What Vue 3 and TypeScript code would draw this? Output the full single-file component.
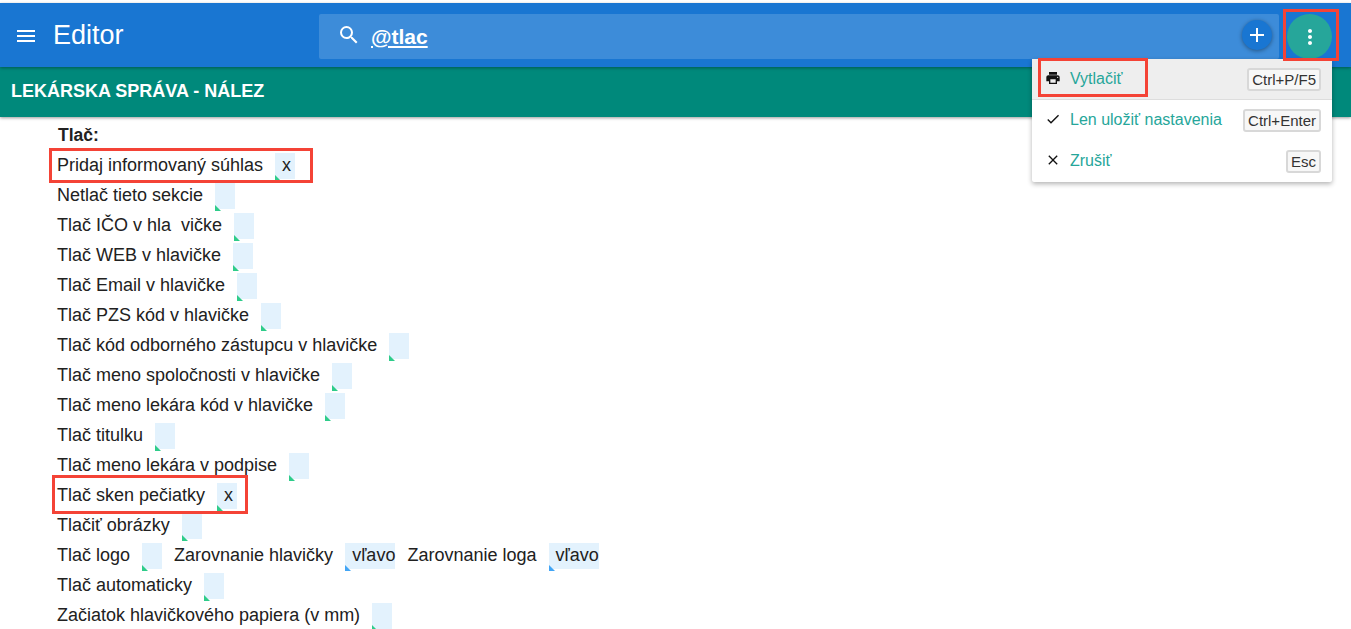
<template>
  <div class="page">
    <header class="toolbar">
      <button class="icon-btn menu-btn" aria-label="menu">
        <svg width="24" height="24" viewBox="0 0 24 24"><path d="M3 18h18v-2H3v2zm0-5h18v-2H3v2zm0-7v2h18V6H3z" fill="#fff" /></svg>
      </button>
      <div class="title">Editor</div>
      <div class="search">
        <svg class="search-icon" width="24" height="24" viewBox="0 0 24 24"><path d="M15.5 14h-.79l-.28-.27A6.47 6.47 0 0 0 16 9.5 6.5 6.5 0 1 0 9.5 16c1.61 0 3.09-.59 4.23-1.57l.27.28v.79l5 4.99L20.49 19l-4.99-5zm-6 0C7.01 14 5 11.99 5 9.5S7.01 5 9.5 5 14 7.01 14 9.5 11.99 14 9.5 14z" fill="#fff" /></svg>
        <span class="query">@tlac</span>
        <button class="add-btn" aria-label="add">
          <svg width="24" height="24" viewBox="0 0 24 24"><path d="M19 13h-6v6h-2v-6H5v-2h6V5h2v6h6v2z" fill="#fff" /></svg>
        </button>
      </div>
      <button class="fab" aria-label="more">
        <svg width="24" height="24" viewBox="0 0 24 24"><path d="M12 8c1.1 0 2-.9 2-2s-.9-2-2-2-2 .9-2 2 .9 2 2 2zm0 2c-1.1 0-2 .9-2 2s.9 2 2 2 2-.9 2-2-.9-2-2-2zm0 6c-1.1 0-2 .9-2 2s.9 2 2 2 2-.9 2-2-.9-2-2-2z" fill="#fff" /></svg>
      </button>
    </header>

    <div class="subbar">LEKÁRSKA SPRÁVA - NÁLEZ</div>

    <main class="content">
      <div class="heading">Tlač:</div>
      <div v-for="row in rows" :key="row[0].label" class="row">
        <template v-for="item in row" :key="item.label">
          <span class="label">{{ item.label }}</span>
          <span class="field" :class="{ select: item.select }">{{ item.value }}</span>
        </template>
      </div>
    </main>

    <div class="menu">
      <div v-for="action in actions" :key="action.label" class="menu-item" :class="{ active: action.active }">
        <svg class="menu-icon" width="16" height="16" viewBox="0 0 24 24"><path :d="action.icon" fill="#111" /></svg>
        <span class="menu-label">{{ action.label }}</span>
        <kbd class="key">{{ action.key }}</kbd>
      </div>
    </div>

    <!-- cervene oznacenia zo screenshotu -->
    <div class="mark mark-fab"></div>
    <div class="mark mark-print"></div>
    <div class="mark mark-consent"></div>
    <div class="mark mark-stamp"></div>
  </div>
</template>

<script setup lang="ts">
interface Item {
  label: string
  value?: string
  select?: boolean
}

const rows: Item[][] = [
  [{ label: 'Pridaj informovaný súhlas', value: 'x' }],
  [{ label: 'Netlač tieto sekcie' }],
  [{ label: 'Tlač IČO v hla  vičke' }],
  [{ label: 'Tlač WEB v hlavičke' }],
  [{ label: 'Tlač Email v hlavičke' }],
  [{ label: 'Tlač PZS kód v hlavičke' }],
  [{ label: 'Tlač kód odborného zástupcu v hlavičke' }],
  [{ label: 'Tlač meno spoločnosti v hlavičke' }],
  [{ label: 'Tlač meno lekára kód v hlavičke' }],
  [{ label: 'Tlač titulku' }],
  [{ label: 'Tlač meno lekára v podpise' }],
  [{ label: 'Tlač sken pečiatky', value: 'x' }],
  [{ label: 'Tlačiť obrázky' }],
  [
    { label: 'Tlač logo' },
    { label: 'Zarovnanie hlavičky', value: 'vľavo', select: true },
    { label: 'Zarovnanie loga', value: 'vľavo', select: true }
  ],
  [{ label: 'Tlač automaticky' }],
  [{ label: 'Začiatok hlavičkového papiera (v mm)' }]
]

const actions = [
  {
    label: 'Vytlačiť',
    key: 'Ctrl+P/F5',
    active: true,
    icon: 'M19 8H5c-1.66 0-3 1.34-3 3v6h4v4h12v-4h4v-6c0-1.66-1.34-3-3-3zm-3 11H8v-5h8v5zm3-7c-.55 0-1-.45-1-1s.45-1 1-1 1 .45 1 1-.45 1-1 1zm-1-9H6v4h12V3z'
  },
  {
    label: 'Len uložiť nastavenia',
    key: 'Ctrl+Enter',
    active: false,
    icon: 'M9 16.17L4.83 12l-1.42 1.41L9 19 21 7l-1.41-1.41z'
  },
  {
    label: 'Zrušiť',
    key: 'Esc',
    active: false,
    icon: 'M19 6.41L17.59 5 12 10.59 6.41 5 5 6.41 10.59 12 5 17.59 6.41 19 12 13.41 17.59 19 19 17.59 13.41 12z'
  }
]
</script>

<style>
html,
body {
  background: #fff;
  overflow: hidden;
}
</style>

<style scoped>
.page {
  position: relative;
  height: 629px;
  padding-top: 3px;
  box-sizing: border-box;
  overflow: hidden;
  font-family: "Liberation Sans", Arial, sans-serif;
  color: #212121;
}

.toolbar {
  position: relative;
  z-index: 2;
  display: flex;
  align-items: center;
  height: 64px;
  background: #1976d2;
  color: #fff;
  box-shadow: 0 1px 3px rgba(0, 0, 0, 0.35);
}

.icon-btn,
.add-btn,
.fab {
  display: flex;
  align-items: center;
  justify-content: center;
  padding: 0;
  border: 0;
  border-radius: 50%;
}

.menu-btn {
  width: 24px;
  height: 24px;
  margin: 2px 0 0 14px;
  background: none;
}

.title {
  width: 266px;
  margin: -1px 0 0 15px;
  font-size: 27px;
  line-height: 32px;
}

.search {
  display: flex;
  align-items: center;
  width: 960px;
  height: 45px;
  padding: 0 7px 0 18px;
  box-sizing: border-box;
  background: rgba(255, 255, 255, 0.16);
  border-radius: 2px;
  margin-top: 3px;
}

.search-icon {
  flex: none;
  margin-bottom: 3px;
}

.query {
  flex: 1;
  margin-left: 10px;
  font-size: 21px;
  font-weight: 700;
  text-decoration: underline;
}

.add-btn {
  width: 30px;
  height: 30px;
  margin-bottom: 3px;
  background: #1976d2;
  box-shadow: 0 1px 4px rgba(0, 0, 0, 0.4);
}

.fab {
  width: 45px;
  height: 45px;
  margin: 3px 0 0 8px;
  background: #26a69a;
}

.subbar {
  position: relative;
  z-index: 1;
  height: 50px;
  padding-left: 11px;
  background: #00897b;
  color: #fff;
  font-size: 18px;
  font-weight: 700;
  line-height: 49px;
  box-shadow: 0 1px 3px rgba(0, 0, 0, 0.4);
}

.content {
  padding: 6px 0 0 57px;
  font-size: 18px;
}

.heading {
  height: 30px;
  padding-left: 1px;
  font-size: 17.5px;
  font-weight: 700;
  line-height: 24px;
}

.row {
  display: flex;
  align-items: flex-start;
  gap: 12px;
  height: 30px;
  line-height: 24px;
  white-space: pre;
}

.field {
  position: relative;
  box-sizing: border-box;
  min-width: 20px;
  height: 26px;
  padding-left: 7px;
  background: #e3f2fd;
}

.field::after {
  content: "";
  position: absolute;
  left: 0;
  bottom: -2px;
  border-top: 6px solid transparent;
  border-left: 6px solid #2ecc8a;
}

.field.select::after {
  border-left-color: #42a5f5;
}

.menu {
  position: absolute;
  z-index: 3;
  top: 59px;
  left: 1032px;
  width: 300px;
  background: #fff;
  border-radius: 2px;
  box-shadow: 0 2px 5px rgba(0, 0, 0, 0.3);
}

.menu-item {
  display: flex;
  align-items: center;
  box-sizing: border-box;
  height: 41px;
  padding: 0 11px 0 13px;
  font-size: 16px;
}

.menu-item.active {
  background: #eee;
  border-bottom: 1px solid #ddd;
}

.menu-icon {
  flex: none;
  margin-bottom: 3px;
}

.menu-label {
  flex: 1;
  margin: 0 0 1px 9px;
  color: #26a69a;
}

.key {
  padding: 1px 3px;
  border: 2px solid #d8d8d8;
  border-radius: 3px;
  background: #f7f7f7;
  color: #333;
  font-family: "Liberation Sans", Arial, sans-serif;
  font-size: 15px;
  line-height: 17px;
}

.mark {
  position: absolute;
  z-index: 4;
  box-sizing: border-box;
  border: 3px solid #f44336;
}

.mark-fab {
  top: 9px;
  left: 1283px;
  width: 56px;
  height: 52px;
}

.mark-print {
  top: 58px;
  left: 1038px;
  width: 110px;
  height: 39px;
}

.mark-consent {
  top: 148px;
  left: 49px;
  width: 264px;
  height: 35px;
}

.mark-stamp {
  top: 475px;
  left: 52px;
  width: 196px;
  height: 39px;
}
</style>
